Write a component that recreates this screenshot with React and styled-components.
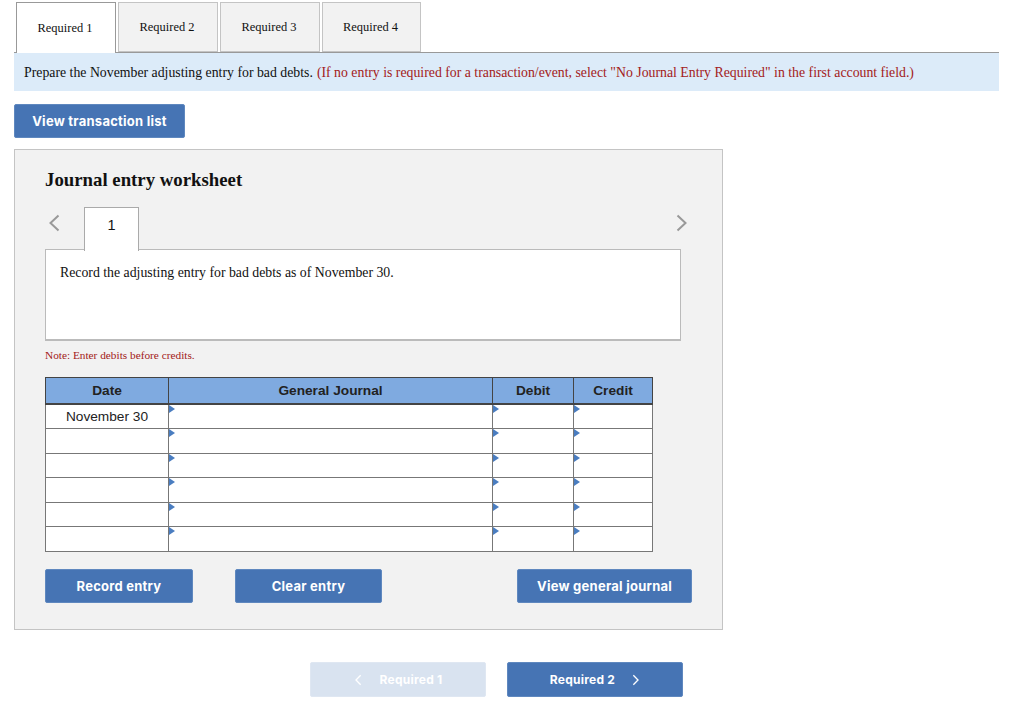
import React from 'react';
import styled, { createGlobalStyle } from 'styled-components';

const GlobalStyle = createGlobalStyle`
  body {
    margin: 0;
    background: #fff;
    font-family: "Liberation Serif", serif;
    color: #111;
  }
`;

const Page = styled.div`
  width: 985px;
  padding: 2px 0 0 14px;
`;

const TabBar = styled.div`
  display: flex;
  gap: 2px;
  height: 50px;
  padding-left: 2px;
  border-bottom: 1px solid #999;
  box-sizing: content-box;
`;

const Tab = styled.div`
  width: ${(p) => p.$width}px;
  height: ${(p) => (p.$active ? 51 : 50)}px;
  box-sizing: border-box;
  padding-right: 2px;
  display: flex;
  align-items: center;
  justify-content: center;
  font-size: 12.45px;
  background: ${(p) => (p.$active ? '#fff' : '#f2f2f2')};
  border: 1px solid ${(p) => (p.$active ? '#999' : '#c4c4c4')};
  border-bottom: ${(p) => (p.$active ? 'none' : '1px solid #c4c4c4')};
`;

const Banner = styled.div`
  height: 38px;
  box-sizing: border-box;
  padding: 1px 10px 0;
  display: flex;
  align-items: center;
  gap: 4px;
  background: #dcebf9;
  font-size: 13.8px;
  white-space: nowrap;
`;

const RedText = styled.span`
  color: #a32020;
`;

const Button = styled.button`
  width: ${(p) => p.$width}px;
  height: 34px;
  padding: 0;
  display: flex;
  align-items: center;
  justify-content: center;
  gap: ${(p) => p.$gap || 0}px;
  background: ${(p) => (p.$disabled ? '#d9e3f0' : '#4674b4')};
  color: #fff;
  border: 1px solid ${(p) => (p.$disabled ? '#dfe7f2' : '#5f88bf')};
  border-radius: 2px;
  font-family: Inter, "Liberation Sans", sans-serif;
  font-size: 13px;
  letter-spacing: 0.25px;
  font-weight: 700;
`;

const ListButton = styled(Button)`
  margin-top: 13px;
`;

const FooterButton = styled(Button)`
  height: 35px;
  font-size: 12px;
`;

const Panel = styled.section`
  width: 709px;
  height: 481px;
  box-sizing: border-box;
  margin-top: 11px;
  padding: 20px 30px 0;
  background: #f2f2f2;
  border: 1px solid #c4c4c4;
`;

const Title = styled.h2`
  margin: 0;
  font-size: 18.8px;
  line-height: 20px;
  font-weight: 700;
`;

const Pager = styled.div`
  display: flex;
  align-items: flex-start;
  width: 643px;
  height: 42px;
  margin-top: 17px;
`;

const Chevron = styled.svg`
  width: 12px;
  height: 18px;
  flex: none;
  fill: none;
  stroke: ${(p) => p.$color || '#999'};
  stroke-width: 2;
`;

const SmallChevron = styled(Chevron)`
  width: 8px;
  height: 12px;
`;

const PagerArrow = styled.div`
  padding: ${(p) => (p.$right ? '7px 0 0 0' : '7px 0 0 3px')};
  width: ${(p) => (p.$right ? 'auto' : '39px')};
  box-sizing: border-box;
`;

const PageTab = styled.div`
  width: 55px;
  height: 44px;
  box-sizing: border-box;
  position: relative;
  z-index: 1;
  margin-right: auto;
  padding-top: 9px;
  text-align: center;
  background: #fff;
  border: 1px solid #aaa;
  border-bottom: none;
  font-family: "Liberation Sans", sans-serif;
  font-size: 14.5px;
`;

const Prompt = styled.div`
  width: 636px;
  height: 92px;
  box-sizing: border-box;
  padding: 14px 14px;
  background: #fff;
  border: 1px solid #bbb;
  border-bottom-width: 2px;
  font-size: 13.8px;
  line-height: 18px;
`;

const Note = styled.div`
  margin-top: 7px;
  font-size: 11.3px;
  line-height: 14px;
  color: #a32020;
`;

const Table = styled.table`
  width: 608px;
  margin-top: 15px;
  border-collapse: collapse;
  table-layout: fixed;
  font-family: "Liberation Sans", sans-serif;
  font-size: 13.7px;
`;

const HeadCell = styled.th`
  height: 25px;
  padding: 0;
  background: #7faae0;
  border: 1px solid #444;
  border-bottom-width: 2px;
  color: #222;
  font-weight: 700;
`;

const Cell = styled.td`
  position: relative;
  height: 24.5px;
  padding: 0;
  box-sizing: border-box;
  background: #fff;
  border: 1px solid #777;
  text-align: center;
  color: #222;
`;

const Marker = styled.span`
  position: absolute;
  top: 0;
  left: 0;
  border-left: 6px solid #4a7dc0;
  border-top: 4px solid transparent;
  border-bottom: 4px solid transparent;
`;

const EntryActions = styled.div`
  display: flex;
  width: 647px;
  margin-top: 17px;
`;

const ClearButton = styled(Button)`
  margin-left: 42px;
  margin-right: auto;
`;

const Footer = styled.div`
  display: flex;
  gap: 21px;
  margin: 32px 0 0 296px;
`;

const rows = ['November 30', '', '', '', '', ''];

const App = () => {
  return (
    <Page>
      <GlobalStyle />
      <TabBar>
        <Tab $active $width={100}>Required 1</Tab>
        <Tab $width={100}>Required 2</Tab>
        <Tab $width={100}>Required 3</Tab>
        <Tab $width={99}>Required 4</Tab>
      </TabBar>
      <Banner>
        <span>Prepare the November adjusting entry for bad debts.</span>
        <RedText>
          (If no entry is required for a transaction/event, select "No Journal Entry Required" in the first account field.)
        </RedText>
      </Banner>
      <ListButton $width={171}>View transaction list</ListButton>
      <Panel>
        <Title>Journal entry worksheet</Title>
        <Pager>
          <PagerArrow>
            <Chevron viewBox="0 0 12 18"><path d="M10.5 1.5 2.5 9l8 7.5" /></Chevron>
          </PagerArrow>
          <PageTab>1</PageTab>
          <PagerArrow $right>
            <Chevron viewBox="0 0 12 18"><path d="M1.5 1.5 9.5 9l-8 7.5" /></Chevron>
          </PagerArrow>
        </Pager>
        <Prompt>Record the adjusting entry for bad debts as of November 30.</Prompt>
        <Note>Note: Enter debits before credits.</Note>
        <Table>
          <colgroup>
            <col style={{ width: 123 }} />
            <col style={{ width: 324 }} />
            <col style={{ width: 81 }} />
            <col style={{ width: 79 }} />
          </colgroup>
          <thead>
            <tr>
              <HeadCell>Date</HeadCell>
              <HeadCell>General Journal</HeadCell>
              <HeadCell>Debit</HeadCell>
              <HeadCell>Credit</HeadCell>
            </tr>
          </thead>
          <tbody>
            {rows.map((date, i) => (
              <tr key={i}>
                <Cell>{date}</Cell>
                <Cell><Marker /></Cell>
                <Cell><Marker /></Cell>
                <Cell><Marker /></Cell>
              </tr>
            ))}
          </tbody>
        </Table>
        <EntryActions>
          <Button $width={148}>Record entry</Button>
          <ClearButton $width={147}>Clear entry</ClearButton>
          <Button $width={175}>View general journal</Button>
        </EntryActions>
      </Panel>
      <Footer>
        <FooterButton $disabled $width={176} $gap={18}>
          <SmallChevron $color="#fff" viewBox="0 0 12 18"><path d="M10 2 3 9l7 7" /></SmallChevron>
          Required 1
        </FooterButton>
        <FooterButton $width={176} $gap={17}>
          Required 2
          <SmallChevron $color="#fff" viewBox="0 0 12 18"><path d="M2 2l7 7-7 7" /></SmallChevron>
        </FooterButton>
      </Footer>
    </Page>
  );
};

export default App;
